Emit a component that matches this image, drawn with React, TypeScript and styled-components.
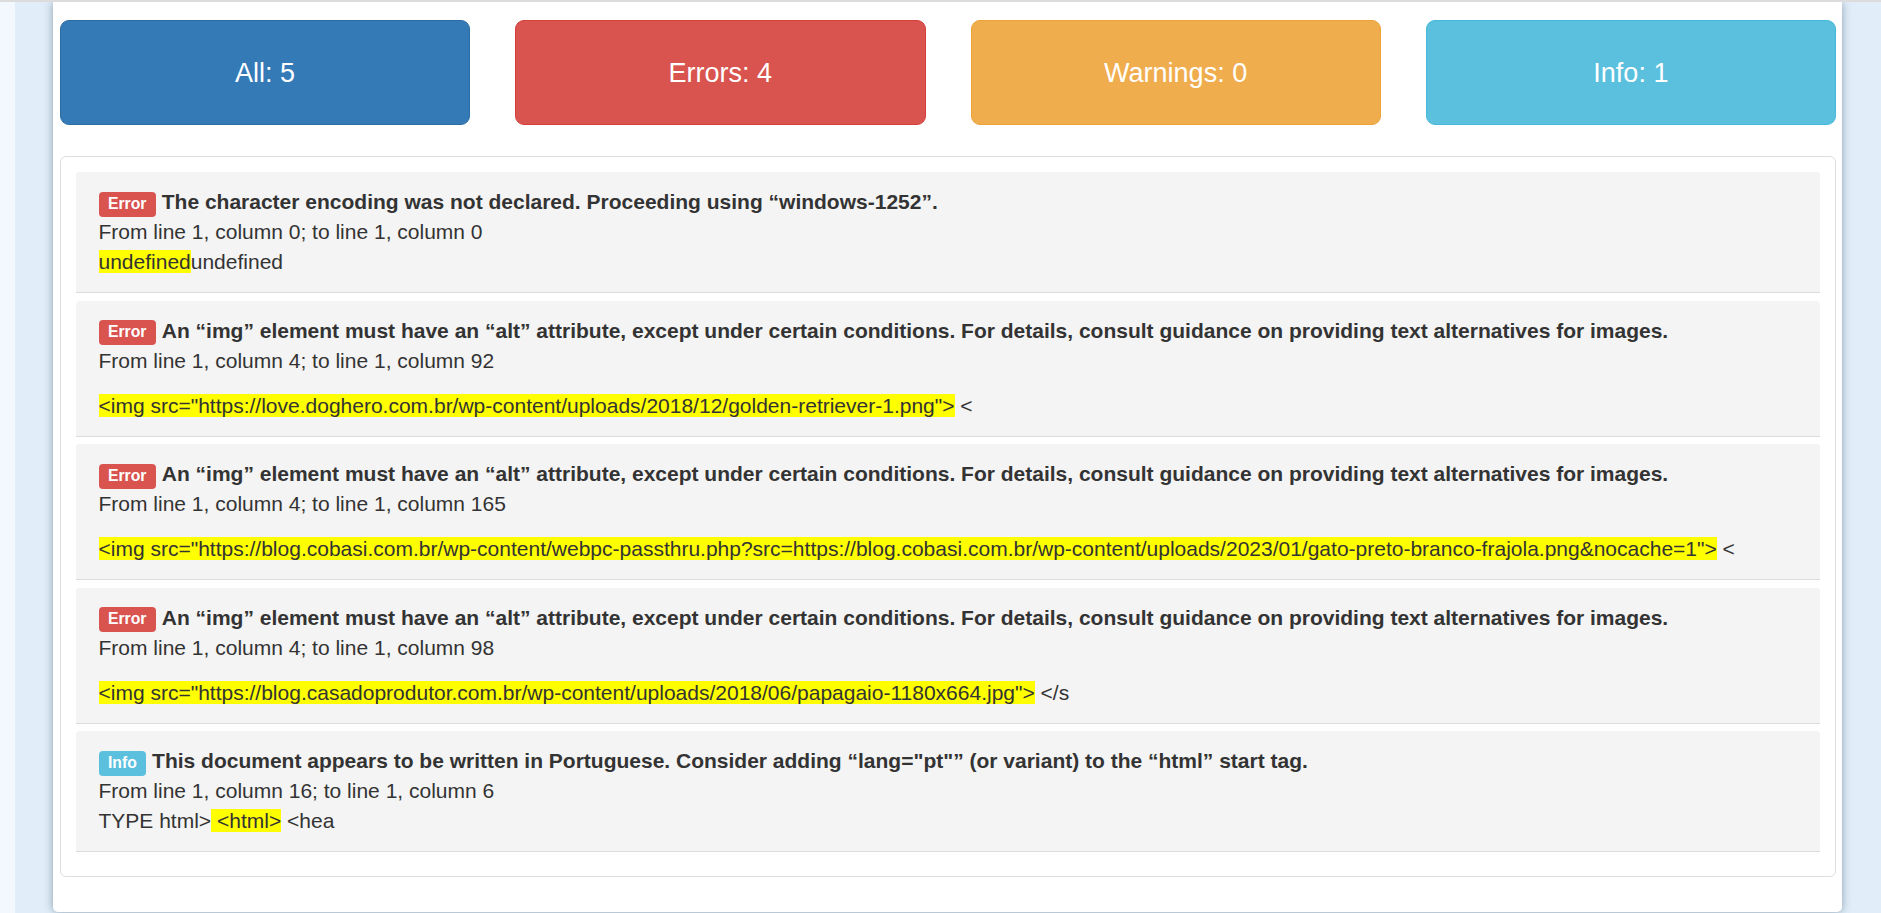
import React from "react";
import styled, { createGlobalStyle, css } from "styled-components";

const GlobalStyle = createGlobalStyle`
  html, body {
    margin: 0;
    padding: 0;
  }
  body {
    font-family: "Liberation Sans", Arial, Helvetica, sans-serif;
    color: #333;
    background: linear-gradient(to right, #f3f7fe 0, #f3f7fe 15px, #e1eefa 15px, #e1eefa 100%);
    border-top: 2px solid #dcdcdc;
    min-height: 911px;
  }
`;

type Kind = "primary" | "danger" | "warning" | "info";

const palette: Record<Kind, { bg: string; border: string }> = {
  primary: { bg: "#337ab7", border: "#2e6da4" },
  danger: { bg: "#d9534f", border: "#d43f3a" },
  warning: { bg: "#f0ad4e", border: "#eea236" },
  info: { bg: "#5bc0de", border: "#46b8da" },
};

const Page = styled.main`
  margin: 0 39px 0 53px;
  background: #fff;
  box-shadow: 0 0 10px rgba(40, 60, 80, 0.45);
  border-radius: 0 0 5px 5px;
  padding: 18px 6px 35px 7px;
`;

const FilterRow = styled.div`
  display: grid;
  grid-template-columns: repeat(4, 1fr);
  gap: 45px;
`;

const FilterButton = styled.button<{ $kind: Kind }>`
  height: 105px;
  border-radius: 9px;
  border: 1px solid ${(p) => palette[p.$kind].border};
  background: ${(p) => palette[p.$kind].bg};
  color: #fff;
  font-family: "Liberation Sans", Arial, sans-serif;
  font-size: 27px;
  line-height: 36px;
  cursor: pointer;
  padding: 0;
`;

const Results = styled.section`
  margin-top: 31px;
  border: 1px solid #ddd;
  border-radius: 6px;
  padding: 15px 15px 16px;
  background: #fff;
`;

const Message = styled.div`
  background: #f4f4f4;
  border-radius: 4px 4px 0 0;
  border-bottom: 1px solid #dcdcdc;
  padding: 15px 22.5px;
  margin-bottom: 7.5px;
  font-size: 21px;
  line-height: 30px;
`;

const Line = styled.div<{ $spaced?: boolean }>`
  line-height: 30px;
  white-space: pre;
  ${(p) =>
    p.$spaced &&
    css`
      margin-top: 15px;
    `}
`;

const Badge = styled.span<{ $kind: Kind }>`
  display: inline;
  background: ${(p) => palette[p.$kind].bg};
  color: #fff;
  font-weight: bold;
  font-size: 15.75px;
  line-height: 1;
  padding: 0.2em 0.6em 0.3em;
  border-radius: 0.25em;
  vertical-align: baseline;
  white-space: nowrap;
`;

const Title = styled.strong`
  font-weight: bold;
`;

const Mark = styled.mark`
  background: #ffff00;
  color: #333;
  padding: 0;
`;

type Msg = {
  kind: "danger" | "info";
  label: string;
  title: string;
  location: string;
  spaced: boolean;
  extract: React.ReactNode;
};

const messages: Msg[] = [
  {
    kind: "danger",
    label: "Error",
    title: "The character encoding was not declared. Proceeding using \u201cwindows-1252\u201d.",
    location: "From line 1, column 0; to line 1, column 0",
    spaced: false,
    extract: (
      <>
        <Mark>undefined</Mark>undefined
      </>
    ),
  },
  {
    kind: "danger",
    label: "Error",
    title:
      "An \u201cimg\u201d element must have an \u201calt\u201d attribute, except under certain conditions. For details, consult guidance on providing text alternatives for images.",
    location: "From line 1, column 4; to line 1, column 92",
    spaced: true,
    extract: (
      <>
        <Mark>{'<img src="https://love.doghero.com.br/wp-content/uploads/2018/12/golden-retriever-1.png">'}</Mark>
        {" <"}
      </>
    ),
  },
  {
    kind: "danger",
    label: "Error",
    title:
      "An \u201cimg\u201d element must have an \u201calt\u201d attribute, except under certain conditions. For details, consult guidance on providing text alternatives for images.",
    location: "From line 1, column 4; to line 1, column 165",
    spaced: true,
    extract: (
      <>
        <Mark>
          {
            '<img src="https://blog.cobasi.com.br/wp-content/webpc-passthru.php?src=https://blog.cobasi.com.br/wp-content/uploads/2023/01/gato-preto-branco-frajola.png&nocache=1">'
          }
        </Mark>
        {" <"}
      </>
    ),
  },
  {
    kind: "danger",
    label: "Error",
    title:
      "An \u201cimg\u201d element must have an \u201calt\u201d attribute, except under certain conditions. For details, consult guidance on providing text alternatives for images.",
    location: "From line 1, column 4; to line 1, column 98",
    spaced: true,
    extract: (
      <>
        <Mark>{'<img src="https://blog.casadoprodutor.com.br/wp-content/uploads/2018/06/papagaio-1180x664.jpg">'}</Mark>
        {" </s"}
      </>
    ),
  },
  {
    kind: "info",
    label: "Info",
    title:
      "This document appears to be written in Portuguese. Consider adding \u201clang=\"pt\"\u201d (or variant) to the \u201chtml\u201d start tag.",
    location: "From line 1, column 16; to line 1, column 6",
    spaced: false,
    extract: (
      <>
        {"TYPE html>"}
        <Mark>{" <html>"}</Mark>
        {" <hea"}
      </>
    ),
  },
];

const filters: { kind: Kind; text: string }[] = [
  { kind: "primary", text: "All: 5" },
  { kind: "danger", text: "Errors: 4" },
  { kind: "warning", text: "Warnings: 0" },
  { kind: "info", text: "Info: 1" },
];

export default function App() {
  return (
    <>
      <GlobalStyle />
      <Page>
        <FilterRow>
          {filters.map((f) => (
            <FilterButton key={f.text} $kind={f.kind}>
              {f.text}
            </FilterButton>
          ))}
        </FilterRow>
        <Results>
          {messages.map((m, i) => (
            <Message key={i}>
              <Line>
                <Badge $kind={m.kind}>{m.label}</Badge> <Title>{m.title}</Title>
              </Line>
              <Line>{m.location}</Line>
              <Line $spaced={m.spaced}>{m.extract}</Line>
            </Message>
          ))}
        </Results>
      </Page>
    </>
  );
}
